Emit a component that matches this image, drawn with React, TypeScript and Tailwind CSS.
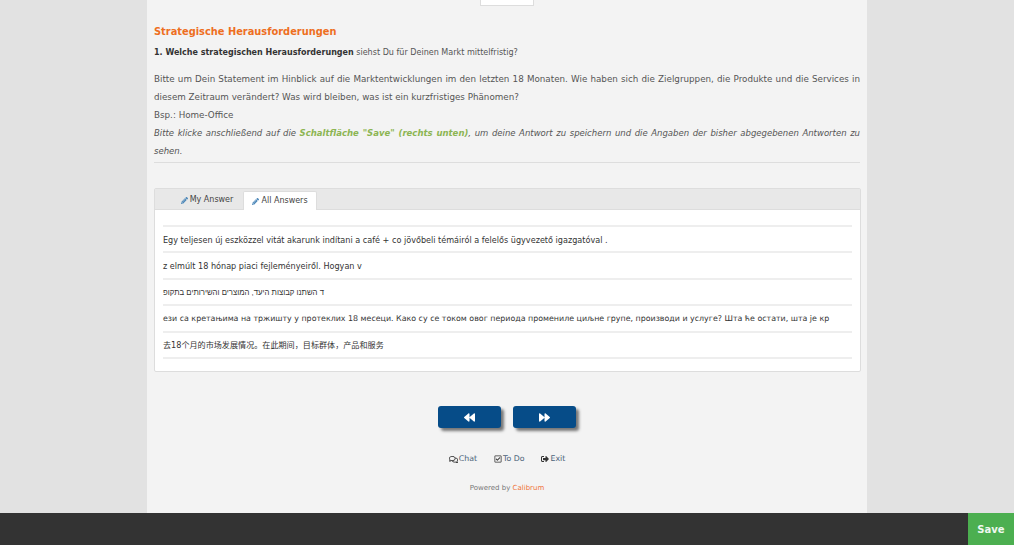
import { FaBackward, FaForward, FaPencilAlt, FaRegCheckSquare, FaRegComments, FaSignOutAlt } from 'react-icons/fa'

const App = () => {
  return (
    <div className="h-screen flex flex-col overflow-hidden bg-[#e2e2e2] font-['DejaVu_Sans','Noto_Sans_CJK_SC',sans-serif] text-[#555]">
      <div className="flex-1 min-h-0 w-[720px] ml-[147px] bg-[#f3f3f3] px-[7px]">
        {/* top box, cut off by the window */}
        <div className="mx-auto w-[54px] h-[6px] bg-white border border-t-0 border-[#ddd]" />

        <h2 className="mt-[19px] text-[9.85px] leading-[14px] font-bold text-[#ee6f1f]">
          Strategische Herausforderungen
        </h2>
        <p className="mt-[7px] text-[8.05px] leading-[14px]">
          <b className="text-[#333] text-[8px]">1. Welche strategischen Herausforderungen</b> siehst Du für Deinen Markt mittelfristig?
        </p>

        <div className="mt-[10px] pb-[2px] text-[8.75px] leading-[18px] text-justify border-b border-[#ddd]">
          <p>
            Bitte um Dein Statement im Hinblick auf die Marktentwicklungen im den letzten 18 Monaten. Wie haben sich die Zielgruppen, die Produkte und die Services in diesem Zeitraum verändert? Was wird bleiben, was ist ein kurzfristiges Phänomen?
          </p>
          <p>Bsp.: Home-Office</p>
          <p className="italic text-[8.5px]">
            Bitte klicke anschließend auf die <b className="text-[#8cb552]">Schaltfläche "Save" (rechts unten)</b>, um deine Antwort zu speichern und die Angaben der bisher abgegebenen Antworten zu sehen.
          </p>
        </div>

        {/* tabs */}
        <div className="mt-[25px] border border-[#ddd] rounded-[2px] bg-white h-[184px] mr-[-1px]">
          <div className="h-[21px] bg-[#e8e8e8] border-b border-[#ddd] flex items-end pl-[9px] text-[8px] text-[#444]">
            <div className="w-[79px] h-[18px] flex items-center justify-center gap-[2px] pl-[7px]">
              <FaPencilAlt className="text-[7px] text-[#4a86b8]" />
              My Answer
            </div>
            <div className="w-[74px] h-[19px] mb-[-1px] flex items-center justify-center gap-[2px] bg-white border border-b-0 border-[#ddd] rounded-t-[2px]">
              <FaPencilAlt className="text-[7px] text-[#4a86b8]" />
              All Answers
            </div>
          </div>
          <div className="px-[8px] pt-[15px]">
            <div className="border-t-2 border-[#eee] text-[#333] whitespace-nowrap">
              <div className="h-[26.4px] flex items-center pt-[1px] border-b-2 border-[#eee] text-[8.1px]">
                Egy teljesen új eszközzel vitát akarunk indítani a café + co jövőbeli témáiról a felelős ügyvezető igazgatóval .
              </div>
              <div className="h-[26.4px] flex items-center pt-[1px] border-b-2 border-[#eee] text-[8.1px]">
                z elmúlt 18 hónap piaci fejleményeiről. Hogyan v
              </div>
              <div className="h-[26.4px] flex items-center pt-[1px] border-b-2 border-[#eee] text-[7.75px] font-['Liberation_Sans',sans-serif]">
                ד השתנו קבוצות היעד, המוצרים והשירותים בתקופ
              </div>
              <div className="h-[26.4px] flex items-center pt-[1px] border-b-2 border-[#eee] text-[7.9px]">
                ези са кретањима на тржишту у протеклих 18 месеци. Како су се током овог периода промениле циљне групе, производи и услуге? Шта ће остати, шта је кр
              </div>
              <div className="h-[26.4px] flex items-center pt-[1px] border-b-2 border-[#eee] text-[8.1px]">
                {'去18个月的市场发展情况。在此期间\uFF0C目标群体\uFF0C产品和服务'}
              </div>
            </div>
          </div>
        </div>

        {/* prev/next */}
        <div className="mt-[34px] flex justify-center gap-[12px]">
          <button className="w-[63px] h-[22px] rounded-[3px] bg-[#064c88] text-white flex items-center justify-center shadow-[3px_3px_3px_#777]">
            <FaBackward className="text-[11px]" />
          </button>
          <button className="w-[63px] h-[22px] rounded-[3px] bg-[#064c88] text-white flex items-center justify-center shadow-[3px_3px_3px_#777]">
            <FaForward className="text-[11px]" />
          </button>
        </div>

        <div className="mt-[25px] flex justify-center gap-[17px] text-[7.8px] leading-[12px] text-[#4a6278]">
          <span className="flex items-center gap-[1px]"><FaRegComments className="text-[9px] text-[#333]" />Chat</span>
          <span className="flex items-center gap-[1px]"><FaRegCheckSquare className="text-[8px] text-[#333]" />To Do</span>
          <span className="flex items-center gap-[1px]"><FaSignOutAlt className="text-[8px] text-[#333]" />Exit</span>
        </div>

        <p className="mt-[18px] text-center text-[7px] leading-[10px] text-[#777]">
          Powered by <span className="text-[#f0743a]">Calibrum</span>
        </p>
      </div>

      <div className="h-[32px] shrink-0 bg-[#333] flex justify-end">
        <button className="w-[46px] bg-[#4caf50] text-[#f0f8f0] text-[10px] font-bold">Save</button>
      </div>
    </div>
  )
}

export default App
